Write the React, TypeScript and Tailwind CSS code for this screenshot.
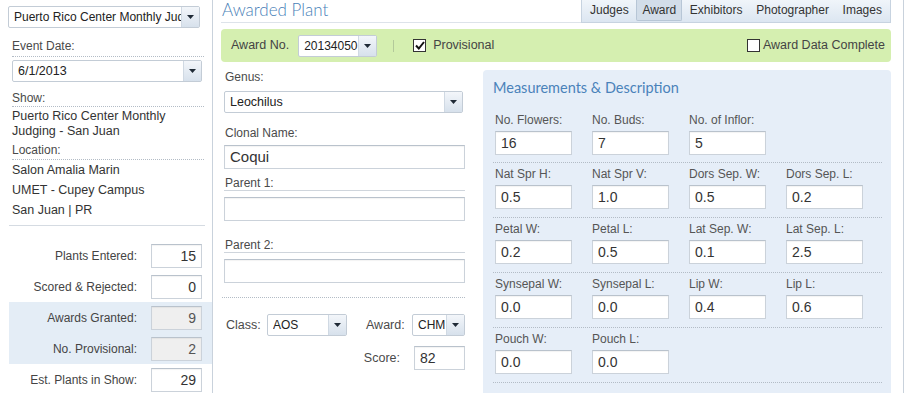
import React from 'react';

const Arrow = () => (
  <svg width="7" height="4" viewBox="0 0 7 4">
    <path d="M0 0h7L3.5 4z" fill="#1f2a36" />
  </svg>
);

interface SelectProps {
  value: string;
  className?: string;
  textClass?: string;
}

const Select: React.FC<SelectProps> = ({ value, className = '', textClass = 'text-[12px]' }) => (
  <div className={`flex h-[22px] rounded-[2px] border border-[#c3ccd6] bg-white ${className}`}>
    <input
      readOnly
      value={value}
      className={`min-w-0 flex-1 bg-transparent pl-[5px] leading-[20px] text-[#222] outline-none ${textClass}`}
    />
    <div className="flex w-[18px] shrink-0 items-center justify-center border-l border-[#d0d9e3] bg-linear-to-b from-[#f3f6fa] to-[#d7e1ec]">
      <Arrow />
    </div>
  </div>
);

const Field: React.FC<{ value?: string; className?: string }> = ({ value = '', className = '' }) => (
  <div
    className={`h-[24px] border border-[#cbd2da] border-t-[#b9c2cc] bg-white px-[5px] leading-[22px] text-[#333] shadow-[inset_0_1px_1px_rgba(0,0,0,0.05)] ${className}`}
  >
    {value}
  </div>
);

const Checkbox: React.FC<{ checked?: boolean }> = ({ checked }) => (
  <span className="flex h-[13px] w-[13px] items-center justify-center border border-[#333] bg-white">
    {checked && (
      <svg width="10" height="9" viewBox="0 0 10 9">
        <path d="M1 4.5l2.8 3L9 1" fill="none" stroke="#111" strokeWidth="2" />
      </svg>
    )}
  </span>
);

// 左侧统计行
const stats = [
  { label: 'Plants Entered:', value: '15', shaded: false },
  { label: 'Scored & Rejected:', value: '0', shaded: false },
  { label: 'Awards Granted:', value: '9', shaded: true },
  { label: 'No. Provisional:', value: '2', shaded: true },
  { label: 'Est. Plants in Show:', value: '29', shaded: false },
];

// 测量数据
const measureRows: { label: string; value: string }[][] = [
  [
    { label: 'No. Flowers:', value: '16' },
    { label: 'No. Buds:', value: '7' },
    { label: 'No. of Inflor:', value: '5' },
  ],
  [
    { label: 'Nat Spr H:', value: '0.5' },
    { label: 'Nat Spr V:', value: '1.0' },
    { label: 'Dors Sep. W:', value: '0.5' },
    { label: 'Dors Sep. L:', value: '0.2' },
  ],
  [
    { label: 'Petal W:', value: '0.2' },
    { label: 'Petal L:', value: '0.5' },
    { label: 'Lat Sep. W:', value: '0.1' },
    { label: 'Lat Sep. L:', value: '2.5' },
  ],
  [
    { label: 'Synsepal W:', value: '0.0' },
    { label: 'Synsepal L:', value: '0.0' },
    { label: 'Lip W:', value: '0.4' },
    { label: 'Lip L:', value: '0.6' },
  ],
  [
    { label: 'Pouch W:', value: '0.0' },
    { label: 'Pouch L:', value: '0.0' },
  ],
];

const tabs = ['Judges', 'Award', 'Exhibitors', 'Photographer', 'Images'];

export default function App() {
  return (
    <div className="flex h-[393px] w-[911px] overflow-hidden bg-white font-['Liberation_Sans',Arial,sans-serif] text-[12px] text-[#4a4a4a]">
      {/* 左侧：展会信息 */}
      <aside className="w-[213px] shrink-0 border-r border-[#c9d2dc]">
        <Select value="Puerto Rico Center Monthly Judging - San Juan" className="ml-[8px] mt-[6px] w-[192px]" />

        <div className="pl-[12px] pr-[8px]">
          <div className="mt-[11px] border-b border-dotted border-[#b3bcc6] pb-[3px] leading-[14px]">Event Date:</div>
          <Select value="6/1/2013" className="mt-[3px] w-[190px]" textClass="text-[12.5px]" />

          <div className="mt-[9px] border-b border-dotted border-[#b3bcc6] pb-[1px] leading-[14px]">Show:</div>
          <div className="mt-[2px] text-[12.5px] leading-[15px] text-[#333]">
            Puerto Rico Center Monthly
            <br />
            Judging - San Juan
          </div>

          <div className="mt-[4px] border-b border-dotted border-[#b3bcc6] pb-[2px] leading-[14px]">Location:</div>
          <div className="text-[12.5px] leading-[20px] text-[#333]">
            <div>Salon Amalia Marin</div>
            <div>UMET - Cupey Campus</div>
            <div>San Juan | PR</div>
          </div>
        </div>

        <div className="ml-[9px] mr-[7px] mt-[5px] border-t border-[#d5dbe2]" />

        <div className="mt-[14px]">
          {stats.map((s) => (
            <div
              key={s.label}
              className={`ml-[9px] flex h-[31px] items-center justify-end pr-[10px] ${s.shaded ? 'bg-[#e4edf6]' : ''}`}
            >
              <span className="mr-[14px] text-[12px] text-[#444]">{s.label}</span>
              <Field
                value={s.value}
                className={`w-[51px] text-right text-[14px] ${s.shaded ? 'bg-[#efefef]! text-[#555]' : ''}`}
              />
            </div>
          ))}
        </div>
      </aside>

      {/* 主区域 */}
      <main className="w-[691px] shrink-0 border-r border-[#c9d2dc] pl-[8px] pr-[12px]">
        <div className="flex h-[23px] items-start border-b border-[#dde3ea]">
          <div className="ml-[1px] font-['Lato',sans-serif] text-[17px] font-light leading-[20px] text-[#4a7fb8]">
            Awarded Plant
          </div>
          <div className="ml-auto flex h-[23px] w-[310px] justify-between border border-t-0 border-[#c7d3e0] bg-linear-to-b from-[#f0f5fa] to-[#dce6f1] pl-[2px] pr-[2px]">
            {tabs.map((t) => (
              <div
                key={t}
                className={`h-[21px] whitespace-nowrap text-[12px] leading-[20px] text-[#333] ${
                  t === 'Award'
                    ? 'rounded-b-[2px] border border-t-0 border-[#b7c6d6] bg-[#d2dde9] px-[5px]'
                    : 'px-[6px]'
                }`}
              >
                {t}
              </div>
            ))}
          </div>
        </div>

        <div className="mt-[6px] flex h-[33px] items-center rounded-[4px] bg-[#d5efb0] pl-[10px] pr-[6px]">
          <span className="text-[12.5px] text-[#444]">Award No.</span>
          <Select value="20134050" className="ml-[9px] w-[79px]" textClass="text-[12px]" />
          <span className="ml-[16px] h-[12px] w-px bg-[#b3c99a]" />
          <span className="ml-[19px]">
            <Checkbox checked />
          </span>
          <span className="ml-[7px] text-[12.5px] text-[#444]">Provisional</span>
          <span className="ml-auto">
            <Checkbox />
          </span>
          <span className="ml-[3px] text-[12.5px] text-[#444]">Award Data Complete</span>
        </div>

        <div className="mt-[8px] flex">
          {/* 植物信息 */}
          <div className="w-[250px] shrink-0 pl-[3px] pr-[6px]">
            <div className="pl-[1px] leading-[14px]">Genus:</div>
            <Select value="Leochilus" className="mt-[7px] w-[239px]" textClass="text-[12.5px]" />

            <div className="mt-[13px] pl-[1px] leading-[14px]">Clonal Name:</div>
            <Field value="Coqui" className="mt-[5px] text-[15px]" />

            <div className="mt-[7px] border-b border-[#cfd5dc] pl-[1px] leading-[14px]">Parent 1:</div>
            <Field className="mt-[6px]" />

            <div className="mt-[17px] border-b border-[#cfd5dc] pl-[1px] leading-[14px]">Parent 2:</div>
            <Field className="mt-[6px]" />

            <div className="-ml-[2px] mt-[14px] border-t border-dotted border-[#b3bcc6]" />

            <div className="mt-[16px] flex h-[22px] items-center">
              <span className="w-[43px] pl-[2px] text-[12.5px]">Class:</span>
              <Select value="AOS" className="w-[80px]" />
              <span className="ml-[19px] w-[46px] text-[12.5px]">Award:</span>
              <Select value="CHM" className="w-[53px]" />
            </div>

            <div className="mt-[10px] flex items-center justify-end">
              <span className="mr-[14px] text-[12.5px]">Score:</span>
              <Field value="82" className="w-[51px] text-[14px]" />
            </div>
          </div>

          {/* 测量与描述 */}
          <div className="ml-[12px] h-[330px] w-[408px] shrink-0 rounded-t-[4px] bg-[#e6eef8] pl-[10px] pr-[9px] pt-[9px]">
            <div className="mb-[12px] font-['Lato',sans-serif] text-[14.5px] leading-[18px] text-[#4a82ba]">
              Measurements &amp; Description
            </div>
            {measureRows.map((row, i) => (
              <div
                key={i}
                className={`grid grid-cols-[97px_97px_97px_97px] border-b border-dotted border-[#b3bcc6] pl-[2px] pt-[4px] ${
                  i === 0 ? 'pb-[7px]' : 'pb-[8px]'
                }`}
              >
                {row.map((m) => (
                  <div key={m.label}>
                    <div className="leading-[14px] text-[#555]">{m.label}</div>
                    <Field value={m.value} className="mt-[4px] w-[77px] text-[14px]" />
                  </div>
                ))}
              </div>
            ))}
          </div>
        </div>
      </main>
    </div>
  );
}
